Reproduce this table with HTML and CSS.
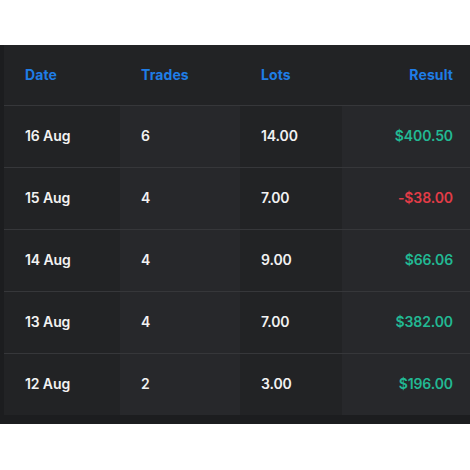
FILE: index.html
```html
<!DOCTYPE html>
<html>
<head>
<meta charset="utf-8">
<link rel="stylesheet" href="styles.css">
</head>
<body>
<div class="panel">
  <table class="trades">
    <colgroup>
      <col class="c-date"><col class="c-trades"><col class="c-lots"><col class="c-result">
    </colgroup>
    <thead>
      <tr><th>Date</th><th>Trades</th><th>Lots</th><th class="num">Result</th></tr>
    </thead>
    <tbody>
      <tr><td>16 Aug</td><td class="alt">6</td><td>14.00</td><td class="alt num pos">$400.50</td></tr>
      <tr><td>15 Aug</td><td class="alt">4</td><td>7.00</td><td class="alt num neg">-$38.00</td></tr>
      <tr><td>14 Aug</td><td class="alt">4</td><td>9.00</td><td class="alt num pos">$66.06</td></tr>
      <tr><td>13 Aug</td><td class="alt">4</td><td>7.00</td><td class="alt num pos">$382.00</td></tr>
      <tr><td>12 Aug</td><td class="alt">2</td><td>3.00</td><td class="alt num pos">$196.00</td></tr>
    </tbody>
  </table>
</div>
</body>
</html>
```
FILE: styles.css
```css
html, body { margin: 0; padding: 0; background: #ffffff; }
body { font-family: Inter, "Noto Sans", sans-serif; }
.panel {
  margin-top: 45px;
  background: #1c1d1f;
  padding: 0 0 9px 4px;
  width: 466px;
}
.trades {
  border-collapse: collapse;
  width: 466px;
  table-layout: fixed;
  background: #222325;
}
.c-date { width: 116px; }
.c-trades { width: 120px; }
.c-lots { width: 102px; }
.c-result { width: 128px; }
th, td {
  padding: 0 0 2px 21px;
  text-align: left;
  font-size: 14px;
  font-weight: 600;
  letter-spacing: -0.1px;
}
th {
  height: 58px;
  color: #1f7de6;
  font-weight: 700;
  letter-spacing: 0.1px;
}
td {
  height: 59px;
  color: #f2f2f2;
  border-top: 1px solid #36373a;
}
td.alt { background: #27282b; }
.num { text-align: right; padding: 0 17px 2px 0; }
.pos { color: #22b893; }
.neg { color: #e23c47; }
```
